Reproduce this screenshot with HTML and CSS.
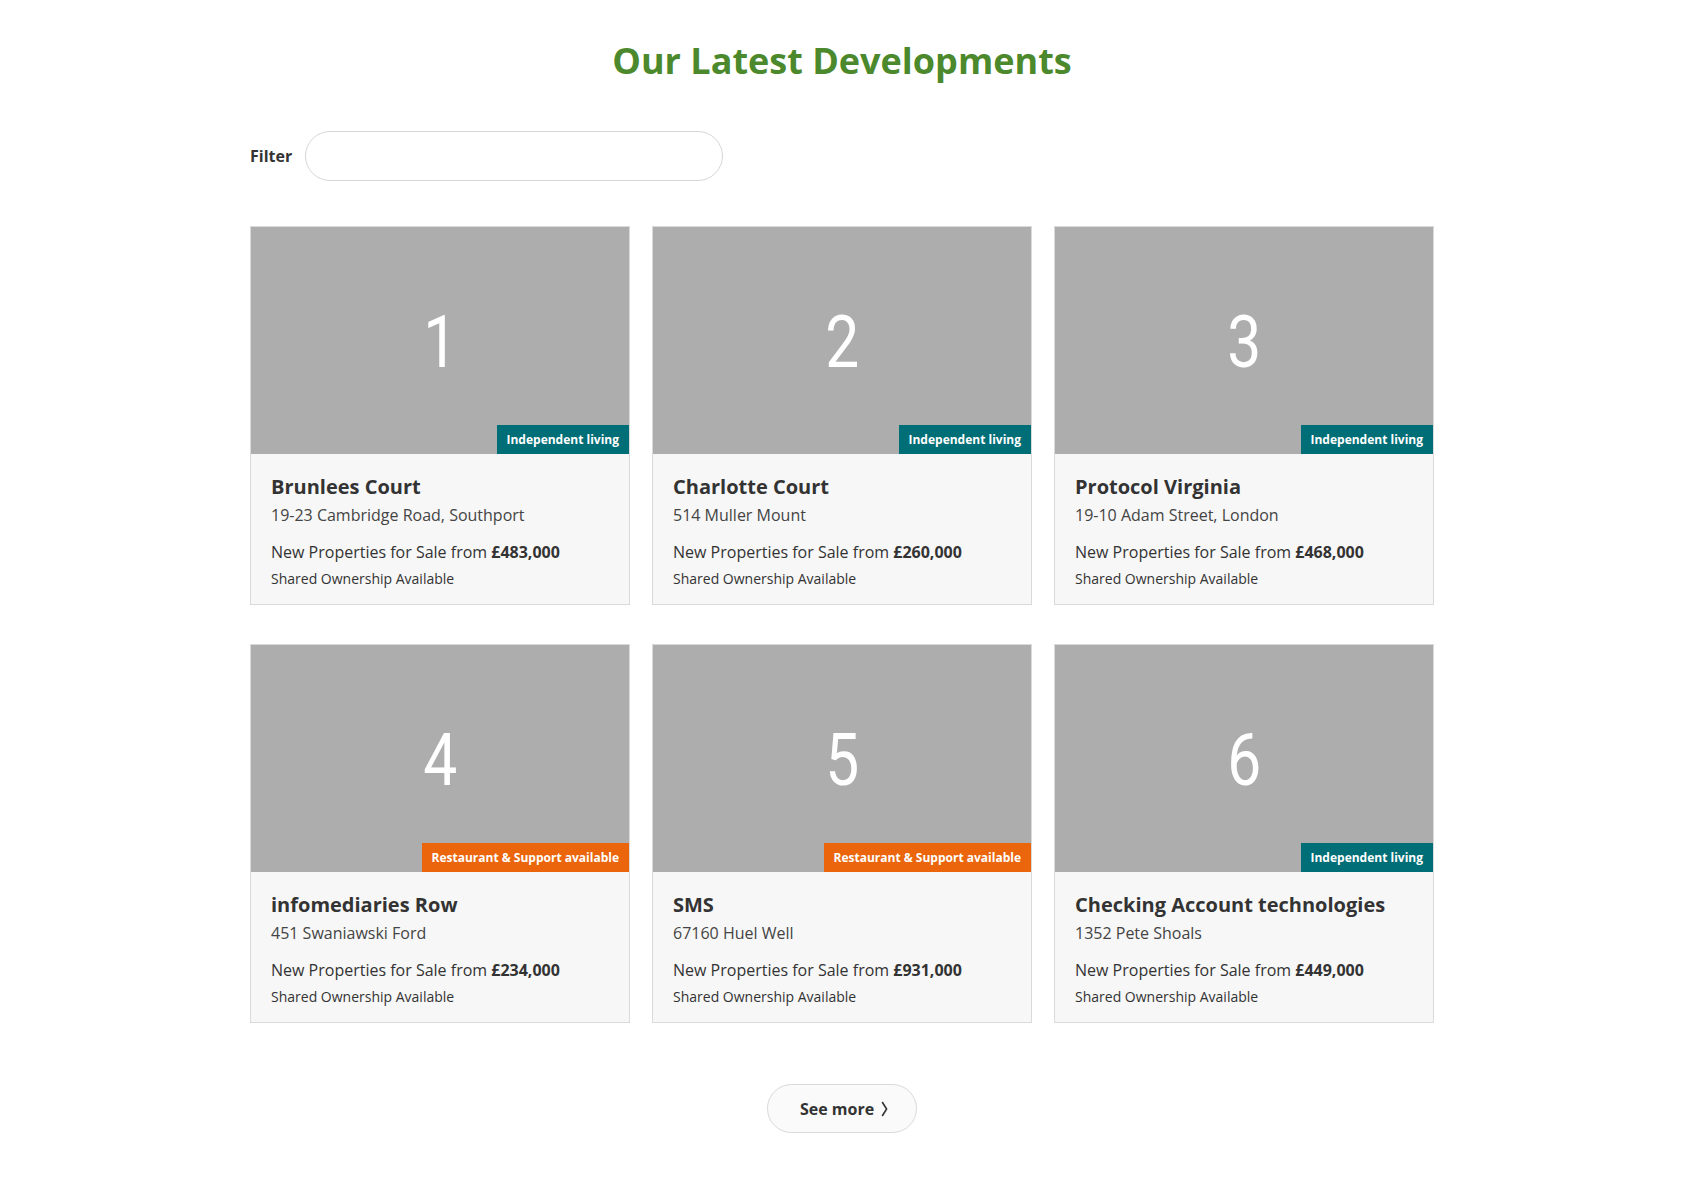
FILE: index.html
```html
<!DOCTYPE html>
<html lang="en">
<head>
<meta charset="utf-8">
<title>Our Latest Developments</title>
<link rel="stylesheet" href="styles.css">
</head>
<body>
<main class="page">
  <h1 class="page-title">Our Latest Developments</h1>

  <div class="filter">
    <label class="filter-label" for="filter">Filter</label>
    <input class="filter-input" id="filter" type="text">
  </div>

  <section class="grid">
    <article class="card">
      <div class="card-image"><span class="card-num">1</span><span class="badge badge-teal">Independent living</span></div>
      <div class="card-body">
        <h2 class="card-title">Brunlees Court</h2>
        <p class="card-address">19-23 Cambridge Road, Southport</p>
        <p class="card-price">New Properties for Sale from <strong>£483,000</strong></p>
        <p class="card-note">Shared Ownership Available</p>
      </div>
    </article>
    <article class="card">
      <div class="card-image"><span class="card-num">2</span><span class="badge badge-teal">Independent living</span></div>
      <div class="card-body">
        <h2 class="card-title">Charlotte Court</h2>
        <p class="card-address">514 Muller Mount</p>
        <p class="card-price">New Properties for Sale from <strong>£260,000</strong></p>
        <p class="card-note">Shared Ownership Available</p>
      </div>
    </article>
    <article class="card">
      <div class="card-image"><span class="card-num">3</span><span class="badge badge-teal">Independent living</span></div>
      <div class="card-body">
        <h2 class="card-title">Protocol Virginia</h2>
        <p class="card-address">19-10 Adam Street, London</p>
        <p class="card-price">New Properties for Sale from <strong>£468,000</strong></p>
        <p class="card-note">Shared Ownership Available</p>
      </div>
    </article>
    <article class="card">
      <div class="card-image"><span class="card-num">4</span><span class="badge badge-orange">Restaurant &amp; Support available</span></div>
      <div class="card-body">
        <h2 class="card-title">infomediaries Row</h2>
        <p class="card-address">451 Swaniawski Ford</p>
        <p class="card-price">New Properties for Sale from <strong>£234,000</strong></p>
        <p class="card-note">Shared Ownership Available</p>
      </div>
    </article>
    <article class="card">
      <div class="card-image"><span class="card-num">5</span><span class="badge badge-orange">Restaurant &amp; Support available</span></div>
      <div class="card-body">
        <h2 class="card-title">SMS</h2>
        <p class="card-address">67160 Huel Well</p>
        <p class="card-price">New Properties for Sale from <strong>£931,000</strong></p>
        <p class="card-note">Shared Ownership Available</p>
      </div>
    </article>
    <article class="card">
      <div class="card-image"><span class="card-num">6</span><span class="badge badge-teal">Independent living</span></div>
      <div class="card-body">
        <h2 class="card-title">Checking Account technologies</h2>
        <p class="card-address">1352 Pete Shoals</p>
        <p class="card-price">New Properties for Sale from <strong>£449,000</strong></p>
        <p class="card-note">Shared Ownership Available</p>
      </div>
    </article>
  </section>

  <div class="more">
    <button class="more-btn" type="button">See more
      <svg class="chev" width="7" height="16" viewBox="0 0 7 16" aria-hidden="true"><polyline points="1.2,1 5.6,8 1.2,15" fill="none" stroke="#333" stroke-width="1.6" stroke-linejoin="miter"/></svg>
    </button>
  </div>
</main>
</body>
</html>
```

FILE: styles.css
```css
html, body {
  margin: 0;
  padding: 0;
  background: #ffffff;
}

body {
  font-family: "Open Sans", "Noto Sans", "Liberation Sans", sans-serif;
  color: #333333;
}

.page {
  width: 1184px;
  margin-left: calc(50% - 600px);
}

.page-title {
  margin: 39px 0 0;
  font-size: 36px;
  line-height: 44px;
  font-weight: 700;
  color: #4b892c;
  text-align: center;
}

.filter {
  display: flex;
  align-items: center;
  gap: 13px;
  margin-top: 48px;
}

.filter-label {
  font-size: 16px;
  line-height: 22px;
  font-weight: 700;
  color: #333;
}

.filter-input {
  box-sizing: border-box;
  width: 418px;
  height: 50px;
  border: 1px solid #d6d6d6;
  border-radius: 25px;
  background: #fff;
  padding: 0 20px;
  font: inherit;
  outline: none;
}

.grid {
  display: grid;
  grid-template-columns: repeat(3, 380px);
  column-gap: 22px;
  row-gap: 39px;
  margin-top: 45px;
}

.card {
  box-sizing: border-box;
  border: 1px solid #dadada;
  background: #f7f7f7;
}

.card-image {
  position: relative;
  height: 227px;
  background: #adadad;
  display: flex;
  align-items: center;
  justify-content: center;
}

.card-num {
  font-family: Roboto, "Liberation Sans", Arial, sans-serif;
  font-weight: 400;
  font-size: 72px;
  line-height: 1;
  color: #ffffff;
  padding-top: 4px;
  transform: scaleX(0.84);
}

.badge {
  position: absolute;
  right: 0;
  bottom: 0;
  height: 29px;
  padding: 0 10px;
  display: flex;
  align-items: center;
  font-size: 12px;
  font-weight: 700;
  color: #ffffff;
}

.badge-teal { background: #006e76; }
.badge-orange { background: #ea650b; }

.card-body {
  padding: 20px 20px 15px;
}

.card-title {
  margin: 0;
  font-size: 20px;
  line-height: 26px;
  font-weight: 700;
  color: #333;
}

.card-address {
  margin: 4px 0 0;
  font-size: 16px;
  line-height: 22px;
  color: #444;
}

.card-price {
  margin: 15px 0 0;
  font-size: 16px;
  line-height: 22px;
  color: #333;
}

.card-price strong {
  font-weight: 700;
}

.card-note {
  margin: 6px 0 0;
  font-size: 14px;
  line-height: 20px;
  color: #333;
}

.more {
  display: flex;
  justify-content: center;
  margin-top: 61px;
}

.more-btn {
  box-sizing: border-box;
  width: 150px;
  height: 49px;
  border: 1px solid #d9d9d9;
  border-radius: 25px;
  background: #fafafa;
  display: flex;
  align-items: center;
  justify-content: center;
  gap: 7px;
  font-family: inherit;
  font-size: 16px;
  font-weight: 700;
  color: #333;
  padding: 0 0 0 4px;
}

.chev {
  display: block;
}
```
